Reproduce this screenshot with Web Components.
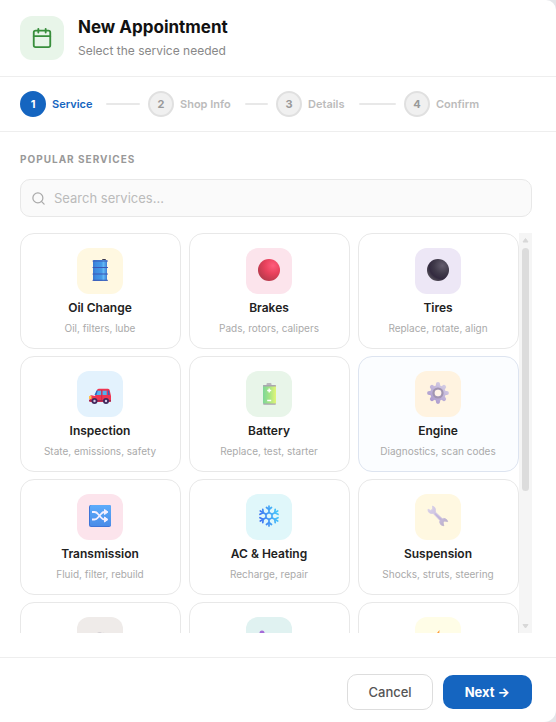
<!DOCTYPE html>
<html lang="en">
<head>
<meta charset="utf-8">
<meta name="viewport" content="width=device-width, initial-scale=1">
<title>New Appointment</title>
<style>
  body {
    margin: 0;
    background: #e4e5e9;
    font-family: Inter, "Liberation Sans", sans-serif;
    color: #1a1a1a;
  }
</style>
</head>
<body>

<appointment-dialog>
  <dialog-header slot="header">
    <svg slot="icon" width="22" height="22" viewBox="0 0 24 24" fill="none" stroke="#388e3c" stroke-width="2" stroke-linecap="round" stroke-linejoin="round" aria-hidden="true">
      <rect x="3" y="4" width="18" height="18" rx="2"/>
      <path d="M16 2v4M8 2v4M3 10h18"/>
    </svg>
    <span slot="title">New Appointment</span>
    <span slot="subtitle">Select the service needed</span>
  </dialog-header>

  <step-item slot="steps" number="1" active>Service</step-item>
  <step-item slot="steps" number="2">Shop Info</step-item>
  <step-item slot="steps" number="3">Details</step-item>
  <step-item slot="steps" number="4" last>Confirm</step-item>

  <span slot="heading">Popular Services</span>
  <search-field slot="search" placeholder="Search services..."></search-field>
  <service-list slot="list"></service-list>

  <action-button slot="actions">Cancel</action-button>
  <action-button slot="actions" primary>Next →</action-button>
</appointment-dialog>

<script>
const ICONS = {
  oil: `
    <defs><linearGradient id="g"><stop offset="0" stop-color="#3a78d0"/><stop offset=".2" stop-color="#3f8ce0"/><stop offset=".6" stop-color="#459ae8"/><stop offset=".75" stop-color="#62b8f4"/><stop offset="1" stop-color="#3d7fd6"/></linearGradient></defs>
    <rect x="13" y="0" width="4" height="2" rx="1" fill="#3b3a50"/>
    <rect x="4" y="1" width="14" height="21" rx="1" fill="url(#g)"/>
    <path d="M4 2h14.500M4 8.500h14.500M4 15h14.500M4 21.200h14.500" stroke="#3c57b4" stroke-width="1.100" stroke-linecap="round"/>`,
  brakes: `
    <defs><radialGradient id="g" cx=".68" cy=".3" r=".75"><stop offset="0" stop-color="#ff5c7c"/><stop offset=".5" stop-color="#e8415c"/><stop offset="1" stop-color="#b83a4c"/></radialGradient></defs>
    <circle cx="11" cy="11" r="11" fill="url(#g)"/>`,
  tires: `
    <defs><radialGradient id="g" cx=".7" cy=".3" r=".75"><stop offset="0" stop-color="#645d6e"/><stop offset=".5" stop-color="#403a4a"/><stop offset=".8" stop-color="#332a3f"/><stop offset="1" stop-color="#4e4954"/></radialGradient></defs>
    <circle cx="11" cy="11" r="11" fill="url(#g)"/>`,
  car: `
    <path d="M6 14 8 8q.6-1.300 2-1.300h9q1.500 0 1.700 1.500L22 14v5q0 1-1 1H2q-1.500 0-1.500-1.500V15q0-1.500 2-1.800Z" fill="#ee3452"/>
    <path d="M6.500 13 8.300 8.700h4V13ZM13.500 8.700h4.200V13h-4.200Z" fill="#52b2ef"/>
    <path d="m5.500 13 2-4.500h1.300L7.500 13ZM18.800 8.600h1l1 4.400h-1.800Z" fill="#2d68c0"/>
    <path d="M12.700 8v11" stroke="#bd2449" stroke-width=".7"/>
    <path d="M0 14h2.500v3H0Z" fill="#ffc34c"/>
    <path d="M0 18h22v1.500H0Z" fill="#a4274f"/>
    <circle cx="5.500" cy="19" r="3" fill="#40285c"/><circle cx="17" cy="19" r="3" fill="#40285c"/>
    <circle cx="5.500" cy="19" r="1.200" fill="#d6cce6"/><circle cx="17" cy="19" r="1.200" fill="#d6cce6"/>`,
  battery: `
    <defs><linearGradient id="g"><stop offset="0" stop-color="#7ed699"/><stop offset=".5" stop-color="#a5e584"/><stop offset="1" stop-color="#e2f578"/></linearGradient></defs>
    <rect x="8.500" y="1" width="5" height="3" rx="1" fill="#bab7bd"/>
    <rect x="5" y="3" width="13" height="19" rx="1" fill="url(#g)"/>
    <path d="M5 4q0-1 1-1h11q1 0 1 1v.5H5ZM5 21.500h13q0 1.200-1 1.200H6q-1 0-1-1.200Z" fill="#aaa5b0"/>
    <path d="M11.200 6.500v4M9.200 8.500h4M9.200 18.500h4" stroke="#fff" stroke-width="1.400"/>`,
  gear: `
    <defs><linearGradient id="g" gradientUnits="userSpaceOnUse" x1="18" y1="2" x2="4" y2="20"><stop offset="0" stop-color="#d6cfe5"/><stop offset="1" stop-color="#a997cc"/></linearGradient></defs>
    <g stroke="url(#g)" stroke-width="4.200" stroke-linecap="round">
      <path d="M11.010 2.200 11 19.800M2.200 11.010 19.800 11M5 5l12 12M17 5 5 17"/>
    </g>
    <circle cx="11" cy="11" r="7.800" fill="url(#g)"/>
    <circle cx="11" cy="11" r="4.500" fill="none" stroke="#a195b0" stroke-width="2.200"/>
    <circle cx="11" cy="11" r="3.300" fill="#fff3e6"/>`,
  shuffle: `
    <defs><linearGradient id="g" x2="0" y2="1"><stop offset="0" stop-color="#5cacfb"/><stop offset="1" stop-color="#4a8ce8"/></linearGradient></defs>
    <rect width="22" height="22" rx="2" fill="#3d75d8"/>
    <rect x="1" width="21" height="21" rx="1.500" fill="url(#g)"/>
    <path d="M3 7h2.500q2 0 3.500 2l3 3.500q1.500 2 3.500 2H18M3 14.500h2.500q2 0 3.500-2l3-3.500q1.500-2 3.500-2H18" fill="none" stroke="#f5f0ff" stroke-width="1.800"/>
    <path d="M15.500 4.500v5L19 7ZM15.500 12v5l3.500-2.500Z" fill="#f5f0ff" stroke="#f5f0ff" stroke-linejoin="round"/>`,
  snow: `
    <defs><linearGradient id="g" gradientUnits="userSpaceOnUse" x1="2" y1="12" x2="20" y2="8"><stop offset="0" stop-color="#3f74f2"/><stop offset="1" stop-color="#48c9fa"/></linearGradient></defs>
    <g fill="none" stroke="url(#g)" stroke-width="1.700" stroke-linecap="round" stroke-linejoin="round">
      <path d="M11 1v6.500M11 14.500V21M2.300 6l5.700 3.200M14 12.800l5.700 3.200M2.300 16 8 12.800M14 9.200 19.700 6"/>
      <path d="m8.500 2.500 2.500 2 2.500-2M8.500 19.500l2.500-2 2.500 2M2 9.300l3.200-1.500-.4-3.500M20 12.700l-3.200 1.500.4 3.500M2 12.700l3.200 1.500-.4 3.500M20 9.300l-3.200-1.500.4-3.500"/>
      <path d="m11 7.500 3 1.700v3.600l-3 1.700-3-1.700V9.200Z"/>
    </g>`,
  wrench: `
    <defs><linearGradient id="g" gradientUnits="userSpaceOnUse" x1="2" y1="2" x2="20" y2="20"><stop offset="0" stop-color="#d9d1e8"/><stop offset=".6" stop-color="#c9bddf"/><stop offset="1" stop-color="#b9aec6"/></linearGradient></defs>
    <path d="M5.500 1q3.300 1 3 4.500L8.300 7l7 6.800q1.300-.7 2.700-.2 2.300.8 2.700 3l-3-.5-1.600 1.500.7 3.200q-3.300-.2-4-3 -.3-1.300.2-2.400L6 8.300Q3.500 9 1.800 7.300.8 6.200 1 4.200l2.700 1.200L5.700 4Z" fill="url(#g)" stroke="url(#g)" stroke-width=".8" stroke-linejoin="round"/>
    <path d="m8.300 9 6 5.800" stroke="#b7a9d6" stroke-width=".8"/>`,
  exhaust: `
    <path d="M8 5q3-2 5 0 4-1 6 3v10q-8 5-16 0V9q1-4 5-4Z" fill="#d3d0d4"/>`,
  ignition: `
    <circle cx="4" cy="5" r="2.500" fill="#a56ad8"/>
    <path d="m5 8 12 11" stroke="#4f8be0" stroke-width="4" stroke-linecap="round"/>`,
  bolt: `
    <path d="M12.500 2 3.500 13H10l-2 8.500L18.500 9H12Z" fill="#ff9d3c"/>`,
};

const SERVICES = [
  { name: 'Oil Change', detail: 'Oil, filters, lube', icon: 'oil', tint: '#fff8e1' },
  { name: 'Brakes', detail: 'Pads, rotors, calipers', icon: 'brakes', tint: '#fce4ec' },
  { name: 'Tires', detail: 'Replace, rotate, align', icon: 'tires', tint: '#ede7f6' },
  { name: 'Inspection', detail: 'State, emissions, safety', icon: 'car', tint: '#e3f2fd' },
  { name: 'Battery', detail: 'Replace, test, starter', icon: 'battery', tint: '#e8f5e9' },
  { name: 'Engine', detail: 'Diagnostics, scan codes', icon: 'gear', tint: '#fff3e0', highlighted: true },
  { name: 'Transmission', detail: 'Fluid, filter, rebuild', icon: 'shuffle', tint: '#fce4ec' },
  { name: 'AC & Heating', detail: 'Recharge, repair', icon: 'snow', tint: '#e0f7fa' },
  { name: 'Suspension', detail: 'Shocks, struts, steering', icon: 'wrench', tint: '#fff8e1' },
  { name: 'Exhaust', detail: 'Muffler, pipes', icon: 'exhaust', tint: '#efebe9' },
  { name: 'Tune-Up', detail: 'Plugs, ignition', icon: 'ignition', tint: '#e0f2f1' },
  { name: 'Electrical', detail: 'Wiring, lights, fuses', icon: 'bolt', tint: '#fffde7' },
  { name: 'Other', detail: 'Something else', icon: 'wrench', tint: '#f5f5f5' },
];

function createTemplate(html) {
  const template = document.createElement('template');
  template.innerHTML = html;
  return template;
}

const dialogTemplate = createTemplate(`
<style>
:host {
  display: flex;
  flex-direction: column;
  height: 100vh;
  box-sizing: border-box;
  background: #fff;
  border-radius: 0 10px 12px 0;
  overflow: hidden;
}
.steps {
  display: flex;
  padding: 14px 24px 14px 20px;
  border-bottom: 1px solid #eee;
}
main {
  display: flex;
  flex-direction: column;
  flex: 1;
  min-height: 0;
  padding: 20px 24px 24px 20px;
}
h2 {
  margin: 0 0 12px;
  font-size: 10px;
  line-height: 15px;
  font-weight: 700;
  letter-spacing: 1px;
  text-transform: uppercase;
  color: #999;
}
slot[name="search"]::slotted(*) {
  margin-bottom: 16px;
}
slot[name="list"]::slotted(*) {
  flex: 1;
  min-height: 0;
}
footer {
  display: flex;
  justify-content: flex-end;
  align-items: center;
  gap: 10px;
  padding: 16px 24px 12px;
  border-top: 1px solid #eee;
}
</style>
<slot name="header"></slot>
<nav class="steps" aria-label="Progress"><slot name="steps"></slot></nav>
<main>
  <h2><slot name="heading"></slot></h2>
  <slot name="search"></slot>
  <slot name="list"></slot>
</main>
<footer><slot name="actions"></slot></footer>
`);

class AppointmentDialog extends HTMLElement {
  constructor() {
    super();
    this.attachShadow({ mode: 'open' }).appendChild(dialogTemplate.content.cloneNode(true));
  }
}

const headerTemplate = createTemplate(`
<style>
:host {
  display: flex;
  align-items: center;
  gap: 14px;
  padding: 16px 24px 16px 20px;
  border-bottom: 1px solid #eee;
}
.icon {
  display: grid;
  place-items: center;
  width: 44px;
  height: 44px;
  border-radius: 12px;
  background: #e8f5e9;
}
h1 {
  margin: 0 0 4px;
  font-size: 17px;
  line-height: 22px;
  font-weight: 700;
  color: #111;
}
p {
  margin: 0;
  font-size: 12px;
  line-height: 18px;
  color: #888;
}
</style>
<div class="icon"><slot name="icon"></slot></div>
<div>
  <h1><slot name="title"></slot></h1>
  <p><slot name="subtitle"></slot></p>
</div>
`);

class DialogHeader extends HTMLElement {
  constructor() {
    super();
    this.attachShadow({ mode: 'open' }).appendChild(headerTemplate.content.cloneNode(true));
  }
}

const stepTemplate = createTemplate(`
<style>
:host {
  display: flex;
  align-items: center;
  flex: 1 1 0;
  min-width: 0;
  color: #bbb;
  font-size: 11px;
  line-height: 14px;
  font-weight: 600;
}
.number {
  display: grid;
  place-items: center;
  box-sizing: border-box;
  width: 26px;
  height: 26px;
  margin-right: 6px;
  border: 2px solid #e0e0e0;
  border-radius: 50%;
  background: #f0f0f0;
  color: #999;
  font-weight: 700;
}
.line {
  flex: 1;
  height: 2px;
  margin: 0 8px 0 14px;
  border-radius: 1px;
  background: #e8e8e8;
}
:host([active]) {
  color: #1565c0;
}
:host([active]) .number {
  border-color: #1565c0;
  background: #1565c0;
  color: #fff;
}
:host([last]) .line {
  display: none;
}
</style>
<span class="number"></span>
<slot></slot>
<span class="line"></span>
`);

class StepItem extends HTMLElement {
  constructor() {
    super();
    this.attachShadow({ mode: 'open' }).appendChild(stepTemplate.content.cloneNode(true));
  }

  connectedCallback() {
    this.shadowRoot.querySelector('.number').textContent = this.getAttribute('number');
  }
}

const searchTemplate = createTemplate(`
<style>
:host {
  display: block;
}
label {
  display: flex;
  align-items: center;
  gap: 8px;
  box-sizing: border-box;
  height: 38px;
  padding: 0 10px;
  border: 1px solid #e8e8e8;
  border-radius: 10px;
  background: #fafafa;
}
label:focus-within {
  border-color: #1565c0;
}
input {
  flex: 1;
  min-width: 0;
  padding: 0;
  border: 0;
  outline: none;
  background: none;
  font: inherit;
  font-size: 13px;
  line-height: 18px;
  color: #222;
}
input::placeholder {
  color: #bbb;
  opacity: 1;
}
</style>
<label>
  <svg width="15" height="15" viewBox="0 0 24 24" fill="none" stroke="#aaa" stroke-width="2" stroke-linecap="round" aria-hidden="true">
    <circle cx="11" cy="11" r="8"/>
    <path d="m21 21-4.350-4.350"/>
  </svg>
  <input type="text" name="search">
</label>
`);

class SearchField extends HTMLElement {
  constructor() {
    super();
    this.attachShadow({ mode: 'open' }).appendChild(searchTemplate.content.cloneNode(true));
  }

  connectedCallback() {
    const input = this.shadowRoot.querySelector('input');
    input.placeholder = this.getAttribute('placeholder');
    input.setAttribute('aria-label', 'Search services');
  }
}

const cardTemplate = createTemplate(`
<style>
:host {
  display: block;
}
button {
  display: flex;
  flex-direction: column;
  align-items: center;
  box-sizing: border-box;
  width: 100%;
  padding: 14px 9px 14px 8px;
  border: 1px solid #e8e8e8;
  border-radius: 14px;
  background: #fff;
  font: inherit;
  cursor: pointer;
}
button:hover,
:host([highlighted]) button {
  border-color: #dde4f0;
  background: #fbfdff;
}
.icon {
  display: grid;
  place-items: center;
  box-sizing: border-box;
  width: 46px;
  height: 46px;
  margin-bottom: 6px;
  padding-bottom: 2px;
  border-radius: 12px;
}
svg {
  display: block;
  overflow: visible;
}
.name {
  margin-bottom: 6px;
  font-size: 12px;
  line-height: 16px;
  font-weight: 600;
  color: #222;
}
.detail {
  font-size: 10px;
  line-height: 12px;
  color: #aaa;
}
</style>
<button type="button">
  <span class="icon"><svg width="22" height="22" viewBox="0 0 22 22" aria-hidden="true"></svg></span>
  <span class="name"><slot></slot></span>
  <span class="detail"><slot name="detail"></slot></span>
</button>
`);

class ServiceCard extends HTMLElement {
  constructor() {
    super();
    this.attachShadow({ mode: 'open' }).appendChild(cardTemplate.content.cloneNode(true));
  }

  connectedCallback() {
    this.shadowRoot.querySelector('.icon').style.background = this.getAttribute('tint');
    this.shadowRoot.querySelector('svg').innerHTML = ICONS[this.getAttribute('icon')];
  }
}

const listTemplate = createTemplate(`
<style>
:host {
  display: flex;
}
.viewport {
  flex: 1;
  min-width: 0;
  overflow-y: auto;
  scrollbar-width: none;
}
.grid {
  display: grid;
  grid-template-columns: repeat(3, minmax(0, 1fr));
  gap: 7px 8px;
}
.scrollbar {
  display: flex;
  flex-direction: column;
  align-items: center;
  width: 13px;
  background: #f5f5f5;
}
.scrollbar svg {
  display: block;
  flex: none;
}
.track {
  flex: 1;
  width: 7px;
  min-height: 0;
}
.thumb {
  border-radius: 4px;
  background: #dcdcdc;
}
</style>
<div class="viewport"><div class="grid"></div></div>
<div class="scrollbar" aria-hidden="true">
  <svg width="13" height="15" viewBox="0 0 13 15"><path d="M6.500 5.500 9 9H4Z" fill="#d8d8d8" stroke="#d8d8d8" stroke-linejoin="round"/></svg>
  <div class="track"><div class="thumb"></div></div>
  <svg width="13" height="15" viewBox="0 0 13 15"><path d="M6.500 10 9 6.500H4Z" fill="#d8d8d8" stroke="#d8d8d8" stroke-linejoin="round"/></svg>
</div>
`);

class ServiceList extends HTMLElement {
  constructor() {
    super();
    this.attachShadow({ mode: 'open' }).appendChild(listTemplate.content.cloneNode(true));
  }

  connectedCallback() {
    this.viewport = this.shadowRoot.querySelector('.viewport');
    this.track = this.shadowRoot.querySelector('.track');
    this.thumb = this.shadowRoot.querySelector('.thumb');
    const grid = this.shadowRoot.querySelector('.grid');
    for (const service of SERVICES) {
      grid.appendChild(this.createCard(service));
    }
    this.viewport.addEventListener('scroll', this.updateThumb.bind(this));
    new ResizeObserver(this.updateThumb.bind(this)).observe(this.viewport);
  }

  createCard(service) {
    const card = document.createElement('service-card');
    card.setAttribute('icon', service.icon);
    card.setAttribute('tint', service.tint);
    card.toggleAttribute('highlighted', !!service.highlighted);
    const detail = document.createElement('span');
    detail.slot = 'detail';
    detail.textContent = service.detail;
    card.append(service.name, detail);
    return card;
  }

  // Keep the thumb in step with the visible part of the list
  updateThumb() {
    const { clientHeight, scrollHeight, scrollTop } = this.viewport;
    const ratio = this.track.clientHeight / scrollHeight;
    this.thumb.style.height = `${Math.round(clientHeight * ratio)}px`;
    this.thumb.style.transform = `translateY(${Math.round(scrollTop * ratio)}px)`;
  }
}

const buttonTemplate = createTemplate(`
<style>
:host {
  display: block;
}
button {
  display: block;
  padding: 9px 20px;
  border: 1px solid #ddd;
  border-radius: 10px;
  background: #fff;
  font: inherit;
  font-size: 13px;
  line-height: 16px;
  font-weight: 500;
  color: #555;
  cursor: pointer;
}
:host([primary]) button {
  padding: 9px 22px;
  border: 0;
  background: #1565c0;
  font-weight: 700;
  color: #fff;
}
</style>
<button type="button"><slot></slot></button>
`);

class ActionButton extends HTMLElement {
  constructor() {
    super();
    this.attachShadow({ mode: 'open' }).appendChild(buttonTemplate.content.cloneNode(true));
  }
}

customElements.define('dialog-header', DialogHeader);
customElements.define('step-item', StepItem);
customElements.define('search-field', SearchField);
customElements.define('service-card', ServiceCard);
customElements.define('service-list', ServiceList);
customElements.define('action-button', ActionButton);
customElements.define('appointment-dialog', AppointmentDialog);
</script>
</body>
</html>
